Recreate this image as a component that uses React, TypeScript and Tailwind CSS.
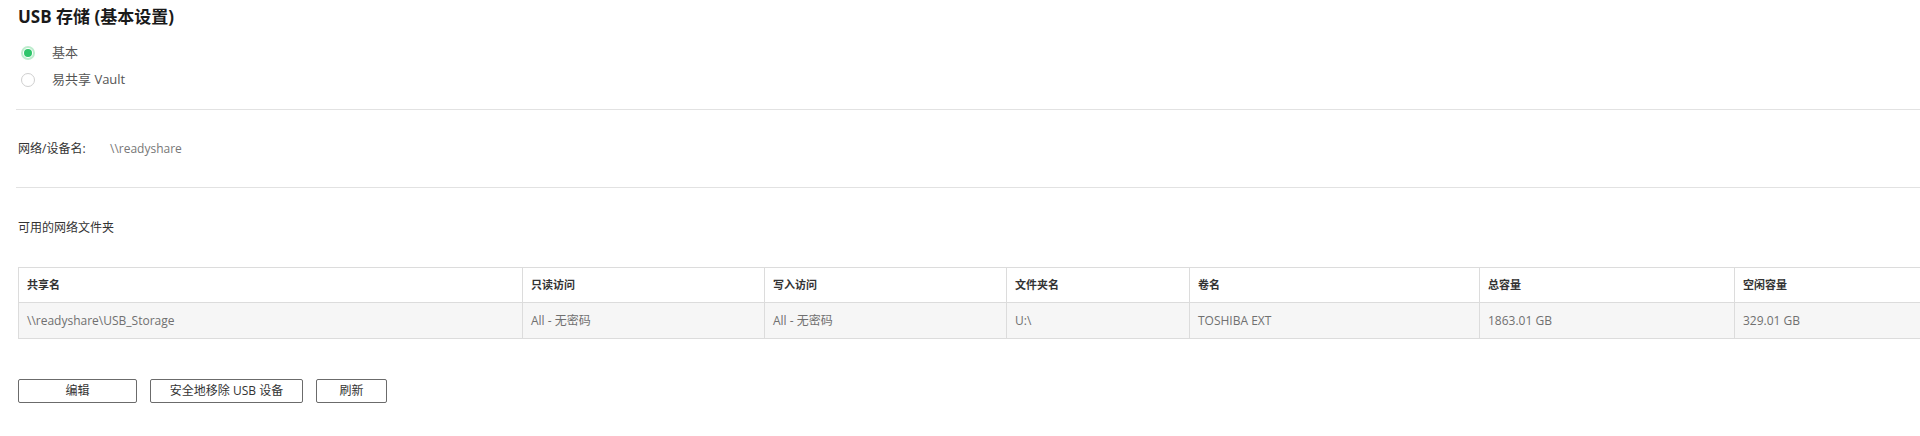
const COLS = [
    { key: 'share', label: '共享名', width: 504 },
    { key: 'read', label: '只读访问', width: 242 },
    { key: 'write', label: '写入访问', width: 242 },
    { key: 'folder', label: '文件夹名', width: 183 },
    { key: 'volume', label: '卷名', width: 290 },
    { key: 'total', label: '总容量', width: 255 },
    { key: 'free', label: '空闲容量', width: 320 },
];

const ROWS = [
    {
        share: '\\\\readyshare\\USB_Storage',
        read: 'All - 无密码',
        write: 'All - 无密码',
        folder: 'U:\\',
        volume: 'TOSHIBA EXT',
        total: '1863.01 GB',
        free: '329.01 GB',
    },
];

function Radio({ checked, label }: { checked: boolean; label: string }) {
    return (
        <label className="flex items-center h-[27px] pl-[3px] cursor-pointer">
            {checked ? (
                <span className="w-[14px] h-[14px] rounded-full border-[2px] border-[#bdeccd] bg-white flex items-center justify-center">
                    <span className="w-[8px] h-[8px] rounded-full bg-[#2ec56a]" />
                </span>
            ) : (
                <span className="w-[14px] h-[14px] rounded-full border border-[#cfcfcf] bg-white" />
            )}
            <span className="ml-[17px] text-[13px] text-[#555]">{label}</span>
        </label>
    );
}

export default function App() {
    return (
        <div
            className="w-[1920px] h-[436px] overflow-hidden bg-white text-[#333]"
            style={{ fontFamily: '"Open Sans", "Noto Sans CJK SC", sans-serif' }}
        >
            <div className="pl-[18px] pt-[6px]">
                <h1 className="text-[17px] leading-[21px] font-bold text-[#1a1a1a]">USB 存储 (基本设置)</h1>

                <div className="mt-[12px]">
                    <Radio checked label="基本" />
                    <Radio checked={false} label="易共享 Vault" />
                </div>
            </div>

            <div className="ml-[16px] mt-[16px] border-t border-[#e2e2e2]" />

            <div className="pl-[18px] mt-[29px] h-[20px] flex items-center text-[12px]">
                <span className="w-[92px] text-[#333]">网络/设备名:</span>
                <span className="text-[#777]">\\readyshare</span>
            </div>

            <div className="ml-[16px] mt-[28px] border-t border-[#e2e2e2]" />

            <div className="pl-[18px] mt-[30px] h-[20px] flex items-center text-[12px] text-[#333]">可用的网络文件夹</div>

            <div className="pl-[18px] mt-[29px]">
                <table className="table-fixed border-collapse w-[2036px]">
                    <colgroup>
                        {COLS.map((c) => (
                            <col key={c.key} style={{ width: c.width }} />
                        ))}
                    </colgroup>
                    <thead>
                        <tr className="h-[35px]">
                            {COLS.map((c) => (
                                <th
                                    key={c.key}
                                    className="border border-[#dcdcdc] px-[8px] text-left text-[11px] font-bold text-[#333]"
                                >
                                    {c.label}
                                </th>
                            ))}
                        </tr>
                    </thead>
                    <tbody>
                        {ROWS.map((r, i) => (
                            <tr key={i} className="h-[36px] bg-[#f6f6f6]">
                                {COLS.map((c) => (
                                    <td
                                        key={c.key}
                                        className="border border-[#dcdcdc] px-[8px] text-[12px] text-[#707070]"
                                    >
                                        {r[c.key as keyof typeof r]}
                                    </td>
                                ))}
                            </tr>
                        ))}
                    </tbody>
                </table>
            </div>

            <div className="pl-[18px] mt-[40px] flex items-center gap-[13px]">
                <button className="w-[119px] h-[24px] border border-[#6b6b6b] rounded-[2px] text-[12px] text-[#333] bg-white">
                    编辑
                </button>
                <button className="w-[153px] h-[24px] border border-[#6b6b6b] rounded-[2px] text-[12px] text-[#333] bg-white">
                    安全地移除 USB 设备
                </button>
                <button className="w-[71px] h-[24px] border border-[#6b6b6b] rounded-[2px] text-[12px] text-[#333] bg-white">
                    刷新
                </button>
            </div>
        </div>
    );
}
